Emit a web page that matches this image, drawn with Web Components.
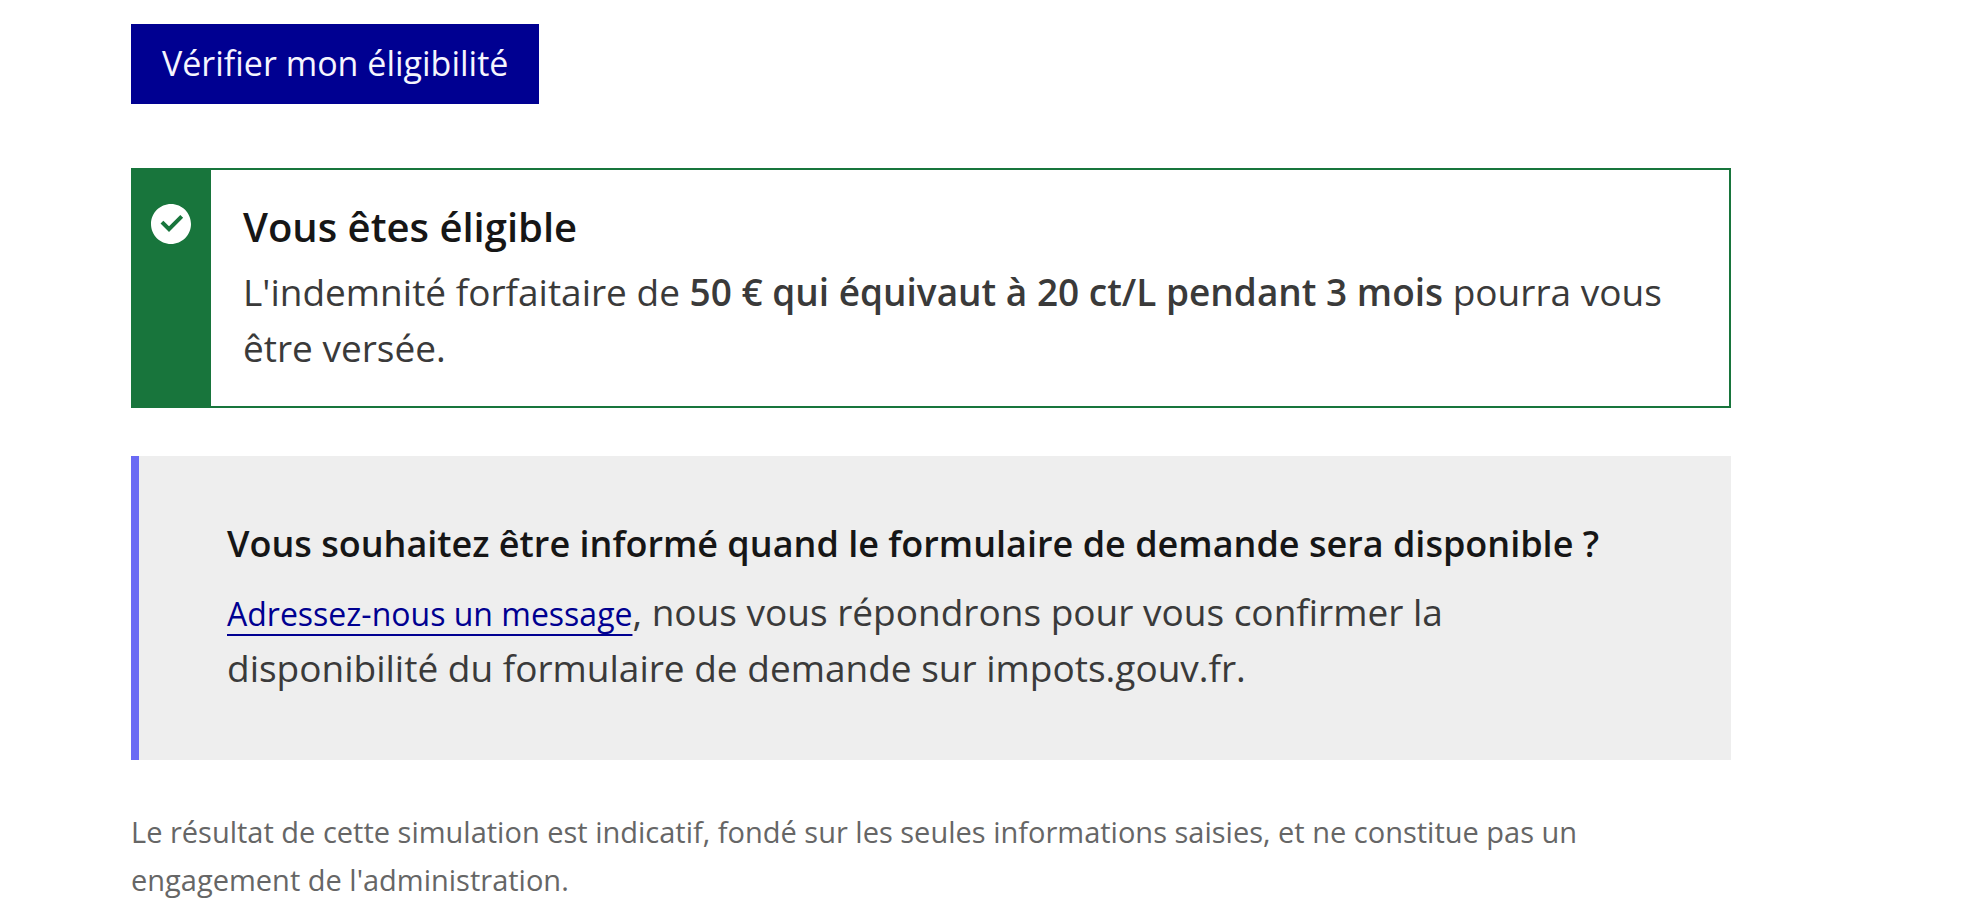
<!DOCTYPE html>
<html lang="fr">
<head>
<meta charset="utf-8">
<meta name="viewport" content="width=device-width, initial-scale=1">
<title>Simulateur d'éligibilité</title>
<style>
  body {
    margin: 0;
    background: #fff;
    color: #3a3a3a;
    font-family: "Open Sans", "Noto Sans", sans-serif;
  }
</style>
</head>
<body>
<eligibility-result></eligibility-result>

<script>
class ActionButton extends HTMLElement {
  constructor() {
    super();
    this.attachShadow({ mode: "open" }).innerHTML = `
      <style>
        :host { display: inline-flex; }
        button {
          min-height: 80px;
          margin: 0;
          padding: 15px 31px 17px;
          border: 0;
          border-radius: 0;
          background: #000091;
          color: #f5f5fe;
          font: 500 34px/48px "Open Sans", "Noto Sans", sans-serif;
          cursor: pointer;
        }
        button:hover { background: #1212ff; }
      </style>
      <button type="button"><slot></slot></button>`;
  }
}

class SuccessAlert extends HTMLElement {
  constructor() {
    super();
    this.attachShadow({ mode: "open" }).innerHTML = `
      <style>
        :host { display: flex; background: #18753c; }
        .strip { flex: none; padding: 32px 16px; }
        svg { display: block; width: 48px; height: 48px; fill: #fff; }
        .content {
          flex: 1;
          min-width: 0;
          padding: 32px 32px 30px;
          border: 2px solid #18753c;
          border-left: 0;
          background: #fff;
        }
        h3 { margin: 0 0 12px; color: #161616; font-size: 40px; line-height: 50px; font-weight: 600; }
        p { margin: 0; font-size: 37px; line-height: 56px; }
        ::slotted(strong) { font-weight: 600; }
      </style>
      <div class="strip">
        <svg viewBox="0 0 24 24" aria-hidden="true"><path d="M12 22C6.477 22 2 17.523 2 12S6.477 2 12 2s10 4.477 10 10-4.477 10-10 10zm-.997-6 7.07-7.071-1.414-1.414-5.656 5.657-2.829-2.829-1.414 1.414L11.003 16z"/></svg>
      </div>
      <div class="content">
        <h3><slot name="title"></slot></h3>
        <p><slot></slot></p>
      </div>`;
  }
}

class CallOut extends HTMLElement {
  constructor() {
    super();
    this.attachShadow({ mode: "open" }).innerHTML = `
      <style>
        :host { display: block; padding: 64px 88px; border-left: 8px solid #6a6af4; background: #eee; }
        h4 { margin: 0 0 16px; color: #161616; font-size: 36px; line-height: 48px; font-weight: 600; }
        p { margin: 0; font-size: 37px; line-height: 56px; }
        ::slotted(a) {
          color: #000091;
          font-size: 32px;
          line-height: 48px;
          text-decoration: underline 2px;
          text-underline-offset: 8px;
          text-decoration-skip-ink: none;
        }
      </style>
      <h4><slot name="title"></slot></h4>
      <p><slot></slot></p>`;
  }
}

class LegalNote extends HTMLElement {
  constructor() {
    super();
    this.attachShadow({ mode: "open" }).innerHTML = `
      <style>
        :host { display: block; }
        p { margin: 0; color: #666; font-size: 29px; line-height: 48px; }
      </style>
      <p><slot></slot></p>`;
  }
}

class EligibilityResult extends HTMLElement {
  constructor() {
    super();
    this.attachShadow({ mode: "open" }).innerHTML = `
      <style>
        :host { display: block; padding: 24px 131px 16px; }
        main { display: flex; flex-direction: column; gap: 48px; max-width: 1600px; }
        action-button { align-self: flex-start; margin-bottom: 16px; }
      </style>
      <main>
        <action-button>Vérifier mon éligibilité</action-button>
        <success-alert role="status"><span slot="title">Vous êtes éligible</span>L'indemnité forfaitaire de <strong>50 € qui équivaut à 20 ct/L pendant 3 mois</strong> pourra vous être versée.</success-alert>
        <call-out><span slot="title">Vous souhaitez être informé quand le formulaire de demande sera disponible ?</span><a href="#contact">Adressez-nous un message</a>, nous vous répondrons pour vous confirmer la disponibilité du formulaire de demande sur impots.gouv.fr.</call-out>
        <legal-note>Le résultat de cette simulation est indicatif, fondé sur les seules informations saisies, et ne constitue pas un engagement de l'administration.</legal-note>
      </main>`;
  }
}

customElements.define("action-button", ActionButton);
customElements.define("success-alert", SuccessAlert);
customElements.define("call-out", CallOut);
customElements.define("legal-note", LegalNote);
customElements.define("eligibility-result", EligibilityResult);
</script>
</body>
</html>
